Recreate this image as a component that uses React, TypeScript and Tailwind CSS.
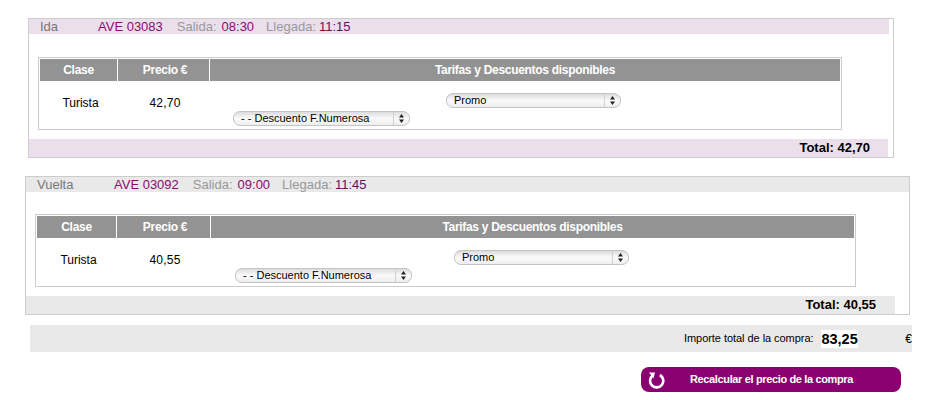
const font = "font-['Liberation_Sans',Arial,sans-serif]";

function Arrows() {
    return (
        <svg width="7" height="11" viewBox="0 0 7 11" className="block">
            <path d="M3.5 1 L6 4.5 H1 Z" fill="#222" />
            <path d="M3.5 10 L6 6.5 H1 Z" fill="#222" />
        </svg>
    );
}

// Mac style select, drawn so that it has the exact width of the picture
function FakeSelect({ label, widthClass }: { label: string; widthClass: string }) {
    return (
        <div className={`${widthClass} flex h-[15px] items-center rounded-[7px] border border-[#c4c4c4] bg-gradient-to-b from-[#dcdcdc] via-[#fafafa] to-[#eeeeee] text-[11px] leading-none text-black`}>
            <span className="flex-1 pl-[7px] whitespace-nowrap">{label}</span>
            <span className="flex h-full w-[16px] items-center justify-center border-l border-[#d0d0d0]">
                <Arrows />
            </span>
        </div>
    );
}

type Leg = {
    cardClass: string;
    barBg: string;
    headerBarClass: string;
    tableClass: string;
    claseClass: string;
    precioClass: string;
    promoClass: string;
    descuentoClass: string;
    footerClass: string;
    titleClass: string;
    title: string;
    tren: string;
    salida: string;
    llegada: string;
    precio: string;
};

function LegCard({ leg }: { leg: Leg }) {
    return (
        <div className={`${leg.cardClass} border border-[#cccccc]`}>
            <div className={`${leg.headerBarClass} ${leg.barBg} flex h-[15px] items-center text-[13px] leading-none whitespace-nowrap`}>
                <span className={`${leg.titleClass} text-[#777777]`}>{leg.title}</span>
                <span className="text-[#8b0a6e]">{leg.tren}</span>
                <span className="ml-[14px] text-[#999999]">Salida:</span>
                <span className="ml-[5px] text-[#8b0a6e]">{leg.salida}</span>
                <span className="ml-[12px] text-[#999999]">Llegada:</span>
                <span className="ml-[3px] text-[#6f0a5e]">{leg.llegada}</span>
            </div>
            <div className={`${leg.tableClass} ml-[9px] h-[73px] border border-[#cccccc] p-px`}>
                <div className="flex h-[22px] gap-px text-[12px] font-bold tracking-[-0.3px] text-white">
                    <div className={`${leg.claseClass} flex items-center justify-center bg-[#939393]`}>Clase</div>
                    <div className={`${leg.precioClass} flex items-center justify-center bg-[#939393] pl-[3px]`}>Precio €</div>
                    <div className="flex flex-1 items-center justify-center bg-[#939393]">Tarifas y Descuentos disponibles</div>
                </div>
                <div className="flex gap-px text-[12px] text-black">
                    <div className={`${leg.claseClass} flex h-[43px] items-center justify-center pl-[4px]`}>Turista</div>
                    <div className={`${leg.precioClass} flex h-[43px] items-center justify-center pl-[3px] tracking-[0.2px]`}>{leg.precio}</div>
                    <div className="flex flex-1 flex-col pt-[12px]">
                        <div className={leg.promoClass}>
                            <FakeSelect label="Promo" widthClass="w-[175px]" />
                        </div>
                        <div className={`${leg.descuentoClass} mt-[3px]`}>
                            <FakeSelect label="- - Descuento F.Numerosa" widthClass="w-[177px]" />
                        </div>
                    </div>
                </div>
            </div>
            <div className={`${leg.footerClass} ${leg.barBg} mt-[9px] flex h-[18px] items-center justify-end text-[13px] font-bold text-black`}>
                Total: {leg.precio}
            </div>
        </div>
    );
}

const legs: Leg[] = [
    {
        cardClass: "ml-[28px] w-[866px] h-[140px]",
        barBg: "bg-[#ecdfec]",
        headerBarClass: "mr-[4px] pl-[11px] mb-[23px]",
        tableClass: "w-[804px]",
        claseClass: "w-[77px]",
        precioClass: "w-[91px]",
        promoClass: "pl-[236px]",
        descuentoClass: "pl-[23px]",
        footerClass: "mr-[5px] pr-[18px]",
        titleClass: "w-[58px]",
        title: "Ida",
        tren: "AVE 03083",
        salida: "08:30",
        llegada: "11:15",
        precio: "42,70",
    },
    {
        cardClass: "ml-[25px] mt-[18px] w-[885px] h-[139px]",
        barBg: "bg-[#e9e9e9]",
        headerBarClass: "pl-[11px] mb-[22px]",
        tableClass: "w-[821px]",
        claseClass: "w-[79px]",
        precioClass: "w-[93px]",
        promoClass: "pl-[243px]",
        descuentoClass: "pl-[24px]",
        footerClass: "mr-[14px] pr-[19px]",
        titleClass: "w-[77px]",
        title: "Vuelta",
        tren: "AVE 03092",
        salida: "09:00",
        llegada: "11:45",
        precio: "40,55",
    },
];

export default function App() {
    return (
        <div className={`${font} h-[400px] w-[928px] overflow-hidden bg-white pt-[18px]`}>
            {legs.map((leg) => (
                <LegCard key={leg.title} leg={leg} />
            ))}
            <div className="ml-[30px] mt-[10px] flex h-[27px] w-[882px] items-center overflow-hidden bg-[#e9e9e9] pl-[654px] whitespace-nowrap text-black">
                <span className="w-[138px] text-[11px] tracking-[-0.05px]">Importe total de la compra:</span>
                <span className="w-[37px] bg-white text-[14.5px] leading-[18px] font-bold">83,25</span>
                <span className="ml-[47px] text-[12px]">€</span>
            </div>
            <div className="ml-[641px] mt-[15px] flex h-[25px] w-[260px] items-center rounded-[8px] bg-[#8b0071] pl-[6px] text-[11px] font-bold tracking-[-0.36px] text-white">
                <svg width="18" height="18" viewBox="0 0 18 18" fill="none" stroke="white" strokeWidth="2.6" className="shrink-0">
                    <path d="M5.6 4.6 A6.6 6.6 0 1 0 12.8 4" />
                    <path d="M2 1.6 L8 1.4 L6.4 7.4 Z" fill="white" stroke="none" />
                </svg>
                <span className="ml-[25px]">Recalcular el precio de la compra</span>
            </div>
        </div>
    );
}
